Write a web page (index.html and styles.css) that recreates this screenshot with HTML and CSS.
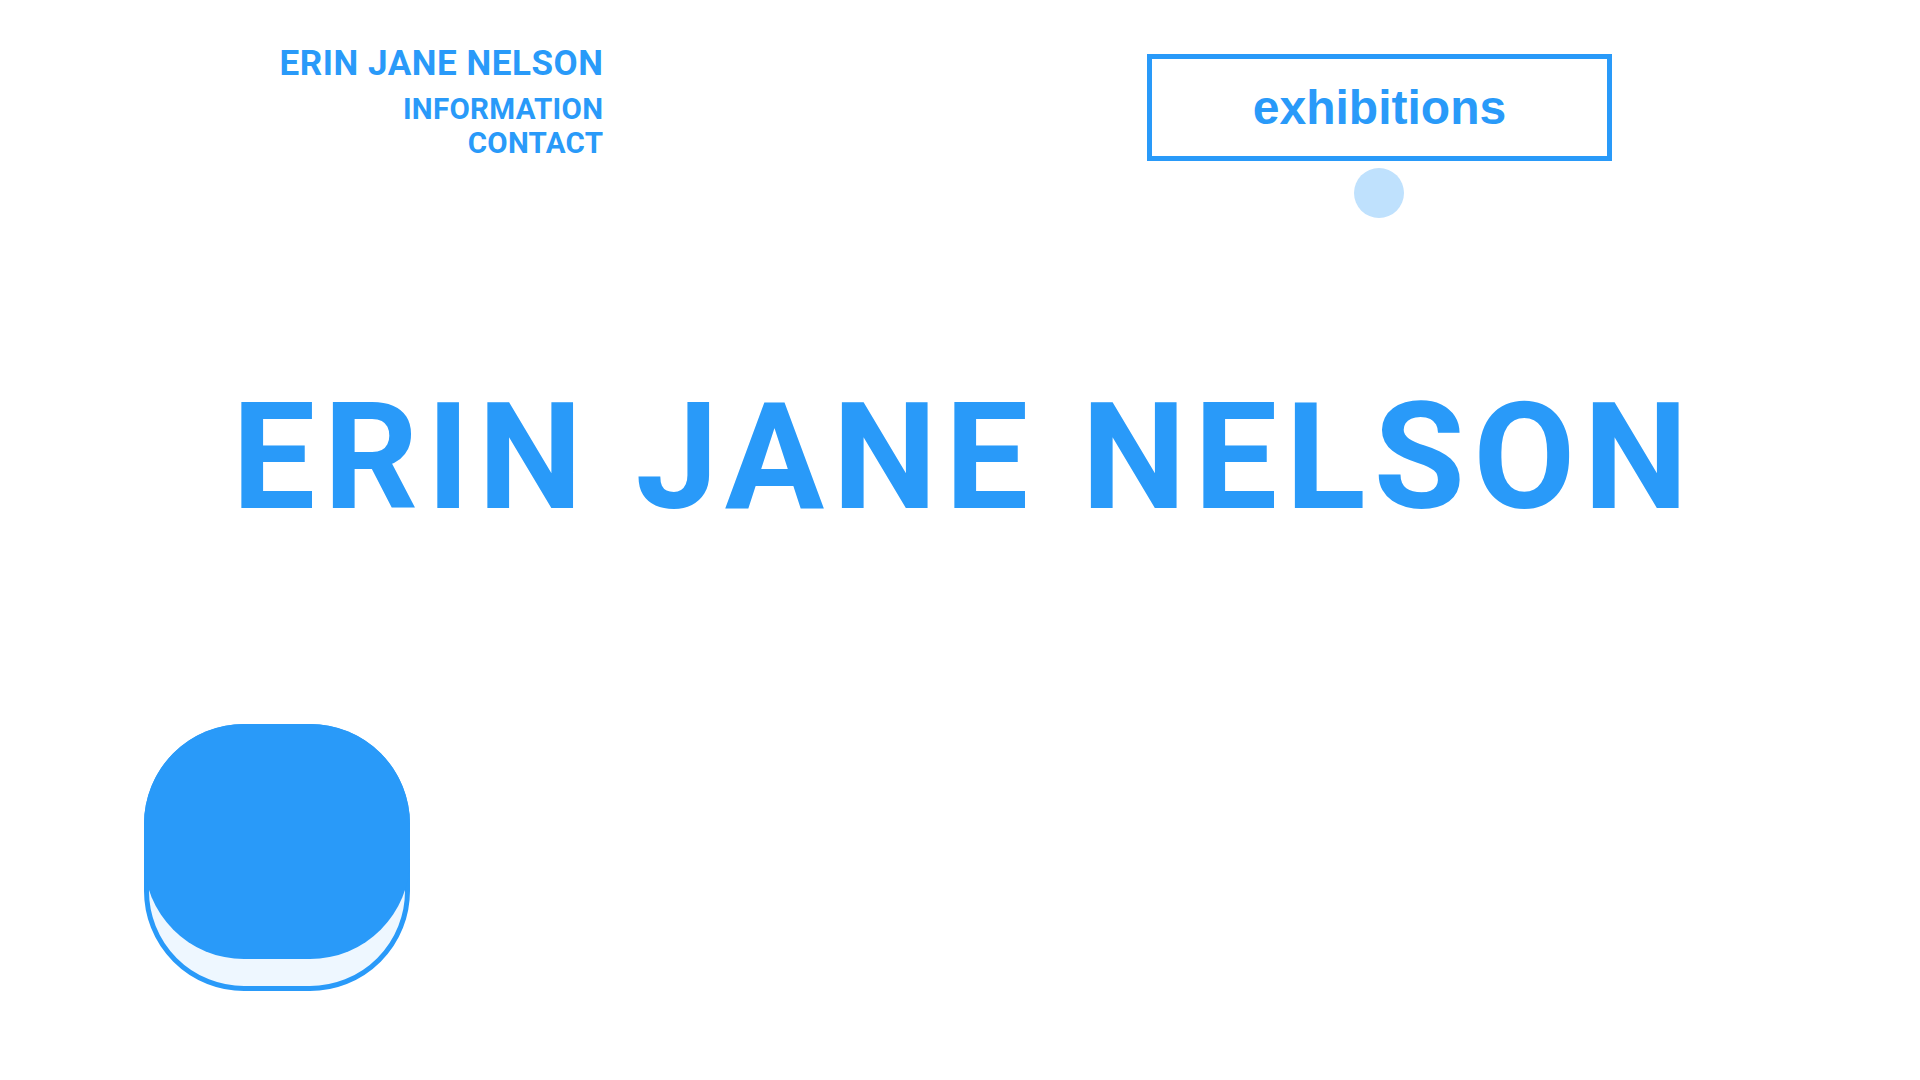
FILE: index.html
```html
<!DOCTYPE html>
<html lang="en">
<head>
<meta charset="utf-8">
<title>Erin Jane Nelson</title>
<link rel="stylesheet" href="styles.css">
</head>
<body>
<div class="page">
  <header class="top">
    <div class="brand">
      <div class="brand-name">ERIN JANE NELSON</div>
      <nav class="menu">
        <a class="menu-link" href="#">INFORMATION</a>
        <a class="menu-link" href="#">CONTACT</a>
      </nav>
    </div>
    <div class="exhibit">
      <div class="exhibit-box">exhibitions</div>
      <div class="exhibit-dot"></div>
    </div>
  </header>
  <h1 class="title">ERIN JANE NELSON</h1>
  <div class="button-wrap">
    <div class="push-button">
      <div class="push-face"></div>
    </div>
  </div>
</div>
</body>
</html>
```
FILE: styles.css
```css
html, body {
  margin: 0;
  padding: 0;
  background: #ffffff;
}
body {
  font-family: Roboto, "Liberation Sans", sans-serif;
  color: #299af9;
}
.page {
  width: 1920px;
  height: 1080px;
  display: flex;
  flex-direction: column;
  overflow: hidden;
}
.top {
  display: flex;
  align-items: flex-start;
  height: 218px;
}
.brand {
  width: 603px;
  padding-top: 43px;
  text-align: right;
  display: flex;
  flex-direction: column;
  align-items: flex-end;
}
.brand-name {
  font-size: 35px;
  font-weight: 700;
  line-height: 41px;
  letter-spacing: 0.55px;
  margin-right: -0.5px;
}
.menu {
  display: flex;
  flex-direction: column;
  align-items: flex-end;
  margin-top: 8px;
}
.menu-link {
  color: #299af9;
  text-decoration: none;
  font-size: 29.5px;
  font-weight: 700;
  line-height: 34px;
  letter-spacing: 0.3px;
  margin-right: -0.3px;
}
.exhibit {
  margin-left: 544px;
  padding-top: 54px;
  display: flex;
  flex-direction: column;
  align-items: center;
}
.exhibit-box {
  box-sizing: border-box;
  width: 465px;
  height: 107px;
  border: 5px solid #299af9;
  display: flex;
  align-items: center;
  justify-content: center;
  font-family: "Liberation Sans", Arial, sans-serif;
  font-weight: 700;
  font-size: 48px;
}
.exhibit-dot {
  width: 50px;
  height: 50px;
  border-radius: 50%;
  background: #bfe1fd;
  margin-top: 7px;
  margin-right: 2px;
}
.title {
  margin: 166px 0 0;
  padding-left: 8px;
  text-align: center;
  font-size: 148px;
  line-height: 148px;
  font-weight: 700;
  letter-spacing: 8.2px;
}
.button-wrap {
  padding-left: 144px;
  margin-top: 192px;
}
.push-button {
  box-sizing: border-box;
  width: 266px;
  height: 267px;
  border: 5px solid #299af9;
  border-radius: 100px;
  background: #eef7ff;
}
.push-face {
  width: 266px;
  height: 235px;
  margin: -5px -5px 0;
  border-radius: 100px;
  background: #299af9;
}
```
